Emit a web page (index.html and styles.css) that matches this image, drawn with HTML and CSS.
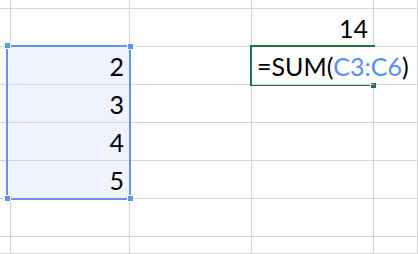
FILE: index.html
```html
<!DOCTYPE html>
<html lang="en">

<head>
    <meta charset="UTF-8">
    <meta name="viewport" content="width=device-width, initial-scale=1.0">
    <title>Sheet</title>
    <link rel="stylesheet" href="styles.css">
</head>

<body>
    <div class="sheet">
        <!-- row 0 (cut off at the top) -->
        <div class="cell"></div>
        <div class="cell"></div>
        <div class="cell"></div>
        <div class="cell"></div>
        <div class="cell"></div>
        <!-- row 1 -->
        <div class="cell"></div>
        <div class="cell"></div>
        <div class="cell"></div>
        <div class="cell num">14</div>
        <div class="cell"></div>
        <!-- row 2 -->
        <div class="cell"></div>
        <div class="cell num picked">2</div>
        <div class="cell"></div>
        <div class="cell formula"><span>=SUM(</span><span class="ref">C3:C6</span><span>)</span></div>
        <div class="cell"></div>
        <!-- row 3 -->
        <div class="cell"></div>
        <div class="cell num picked">3</div>
        <div class="cell"></div>
        <div class="cell"></div>
        <div class="cell"></div>
        <!-- row 4 -->
        <div class="cell"></div>
        <div class="cell num picked">4</div>
        <div class="cell"></div>
        <div class="cell"></div>
        <div class="cell"></div>
        <!-- row 5 -->
        <div class="cell"></div>
        <div class="cell num picked">5</div>
        <div class="cell"></div>
        <div class="cell"></div>
        <div class="cell"></div>
        <!-- row 6 -->
        <div class="cell"></div>
        <div class="cell"></div>
        <div class="cell"></div>
        <div class="cell"></div>
        <div class="cell"></div>
        <!-- row 7 (cut off at the bottom) -->
        <div class="cell"></div>
        <div class="cell"></div>
        <div class="cell"></div>
        <div class="cell"></div>
        <div class="cell"></div>

        <!-- range referenced by the formula -->
        <div class="range">
            <i class="handle tl"></i>
            <i class="handle tr"></i>
            <i class="handle bl"></i>
            <i class="handle br"></i>
        </div>
        <!-- cell being edited -->
        <div class="active">
            <i class="fill"></i>
        </div>
    </div>
</body>

</html>
```

FILE: styles.css
```css
html,
body {
    margin: 0;
    padding: 0;
    width: 100%;
    height: 100%;
    background: #fff;
    overflow: hidden;
}

.sheet {
    display: grid;
    grid-template-columns: 8px 122px 122px 122px 1fr;
    grid-template-rows: 9px repeat(6, 38px) 1fr;
    height: 100vh;
    position: relative;
    font-family: Lato, "Liberation Sans", sans-serif;
    font-size: 25px;
    color: #000;
}

.cell {
    box-sizing: border-box;
    border-right: 1px solid #d4d4d4;
    border-bottom: 1px solid #d4d4d4;
    display: flex;
    align-items: flex-end;
    line-height: 1;
    padding: 0 5px 5px 5px;
    min-width: 0;
}

.num {
    justify-content: flex-end;
}

.picked {
    background: #eef3fd;
}

/* formula spills over into the next column */
.formula {
    white-space: nowrap;
    overflow: visible;
    border-right-color: transparent;
    position: relative;
    z-index: 3;
}

.formula .ref {
    color: #5a8ff0;
}

/* outlines sit on top of the grid area they belong to */
.range,
.active {
    position: absolute;
    top: -2px;
    left: -2px;
    right: -1px;
    bottom: -1px;
    z-index: 2;
}

.range {
    grid-column: 2 / 3;
    grid-row: 3 / 7;
    border: 2px solid #6393ec;
}

/* edit box: open on the right where the text runs on */
.active {
    grid-column: 4 / 5;
    grid-row: 3 / 4;
    border: 2px solid #217346;
    border-right: 0;
}

.handle {
    position: absolute;
    width: 5px;
    height: 5px;
    background: #6393ec;
    border: 1px solid #fff;
}

.handle.tl {
    left: -4px;
    top: -5px;
}

.handle.tr {
    right: -5px;
    top: -4px;
}

.handle.bl {
    left: -4px;
    bottom: -4px;
}

.handle.br {
    right: -5px;
    bottom: -4px;
}

.active .fill {
    position: absolute;
    right: -2px;
    bottom: -5px;
    width: 5px;
    height: 5px;
    background: #217346;
    border: 1px solid #fff;
}
```
